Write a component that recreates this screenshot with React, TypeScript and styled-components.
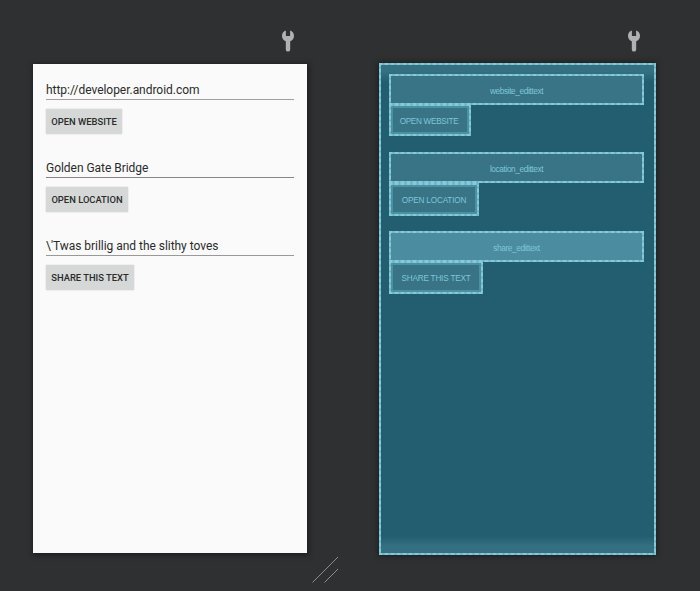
import React from "react";
import styled, { createGlobalStyle, css } from "styled-components";

const GlobalStyle = createGlobalStyle`
  * { box-sizing: border-box; }
  body { margin: 0; background: #2f3032; }
`;

const dashedEdges = css`
  background-image:
    repeating-linear-gradient(90deg, #86c9d9 0 3px, #6ab2c3 4px 5px, #86c9d9 6px),
    repeating-linear-gradient(90deg, #86c9d9 0 3px, #6ab2c3 4px 5px, #86c9d9 6px),
    repeating-linear-gradient(180deg, #86c9d9 0 3px, #6ab2c3 4px 5px, #86c9d9 6px),
    repeating-linear-gradient(180deg, #86c9d9 0 3px, #6ab2c3 4px 5px, #86c9d9 6px);
  background-size: 100% 2px, 100% 2px, 2px 100%, 2px 100%;
  background-position: 0 0, 0 100%, 0 0, 100% 0;
  background-repeat: no-repeat;
`;

const Surface = styled.main`
  position: relative;
  display: flex;
  align-items: flex-start;
  width: 700px;
  height: 591px;
  padding: 29px 0 0 33px;
  gap: 72px;
  overflow: hidden;
  background: #2f3032;
`;

const Column = styled.section<{ $width: number }>`
  display: flex;
  flex-direction: column;
  width: ${(p) => p.$width}px;
`;

const Toolbar = styled.div<{ $inset: number; $height: number }>`
  display: flex;
  justify-content: flex-end;
  height: ${(p) => p.$height}px;
  padding-right: ${(p) => p.$inset}px;
`;

const DesignScreen = styled.div`
  display: flex;
  flex-direction: column;
  height: 489px;
  padding: 17px 13px 0;
  background: #fafafa;
  box-shadow: 1px 1px 5px 1px #1b1c1d;
`;

const Group = styled.div`
  display: flex;
  flex-direction: column;
  align-items: flex-start;
  height: 78px;
`;

const Field = styled.div<{ $line: string }>`
  width: 248px;
  height: 19px;
  border-bottom: 1px solid ${(p) => p.$line};
  font: 400 12px/18.5px Roboto, sans-serif;
  letter-spacing: -0.035px;
  color: #2b2b2b;
  white-space: nowrap;
`;

const Action = styled.div<{ $width: number }>`
  width: ${(p) => p.$width}px;
  height: 25px;
  margin-top: 9px;
  border-radius: 1px;
  background: #d6d8d7;
  box-shadow: 0 0 1.5px rgba(0, 0, 0, 0.25);
  font: 500 9.4px/25.5px Roboto, sans-serif;
  color: #2a2b2b;
  text-align: center;
  white-space: nowrap;
`;

const BlueprintScreen = styled.div`
  position: relative;
  height: 492px;
  padding: 11px 10px 0;
  background-color: #235d70;
  box-shadow: 0 0 5px 1px #1d1e1f;
  ${dashedEdges}
`;

const SystemBar = styled.div<{ $bottom?: boolean }>`
  position: absolute;
  left: 2px;
  right: 2px;
  height: 17px;
  ${(p) => (p.$bottom ? "bottom: 2px;" : "top: 2px;")}
  background: linear-gradient(${(p) => (p.$bottom ? "#235d70, #356f82 60%" : "#356f82 40%, #235d70")});
`;

const BlueGroup = styled.div<{ $height: number }>`
  position: relative;
  display: flex;
  flex-direction: column;
  align-items: flex-start;
  height: ${(p) => p.$height}px;
`;

const BlueField = styled.div<{ $hover?: boolean }>`
  width: 255px;
  height: 31px;
  background-color: ${(p) => (p.$hover ? "#4b8ca0" : "#397386")};
  ${dashedEdges}
  font: 400 8.3px/35px "Liberation Sans", sans-serif;
  letter-spacing: -0.4px;
  color: #7dc7d8;
  text-align: center;
`;

const BlueButton = styled.div<{ $width: number; $height: number; $overlap: number }>`
  display: flex;
  width: ${(p) => p.$width}px;
  height: ${(p) => p.$height}px;
  margin-top: ${(p) => -p.$overlap}px;
  padding: 2px;
  background-color: #397386;
  ${dashedEdges}
`;

const BlueLabel = styled.div<{ $tracking: number; $inset: number }>`
  flex: 1;
  padding-right: ${(p) => p.$inset}px;
  border: 2px solid #4b91a4;
  font: 400 8.2px/28px "Liberation Sans", sans-serif;
  letter-spacing: ${(p) => p.$tracking}px;
  color: #7dc7d8;
  text-align: center;
  white-space: nowrap;
`;

const ResizeGrip = styled.svg`
  position: absolute;
  left: 311px;
  top: 556px;
`;

const Wrench = () => (
  <svg width="14" height="24" viewBox="0 0 14 24" aria-label="Device configuration">
    <path
      d="M4.9 1.4C2.4 2.1 1 4.1 1 6.7c0 2.8 1.5 4.9 3.8 5.6v8.1a2.2 2.2 0 0 0 4.4 0v-8.1c2.3-.7 3.8-2.8 3.8-5.6 0-2.6-1.4-4.6-3.9-5.3v5.7H4.9z"
      fill="#afb1b3"
    />
  </svg>
);

const rows = [
  { text: "http://developer.android.com", action: "OPEN WEBSITE", width: 76, line: "#a0a0a0", id: "website_edittext", blueWidth: 82, blueHeight: 32, overlap: 1, height: 78, labelTracking: -0.3, inset: 2 },
  { text: "Golden Gate Bridge", action: "OPEN LOCATION", width: 82, line: "#868686", id: "location_edittext", blueWidth: 90, blueHeight: 33, overlap: 0, height: 79, labelTracking: -0.18, inset: 0 },
  { text: "\\'Twas brillig and the slithy toves", action: "SHARE THIS TEXT", width: 88, line: "#999", id: "share_edittext", blueWidth: 94, blueHeight: 33, overlap: 1, height: 79, labelTracking: -0.2, inset: 0 },
];

export default function App() {
  return (
    <>
      <GlobalStyle />
      <Surface>
        <Column $width={274}>
          <Toolbar $inset={12} $height={35}><Wrench /></Toolbar>
          <DesignScreen>
            {rows.map((r) => (
              <Group key={r.id}>
                <Field $line={r.line}>{r.text}</Field>
                <Action $width={r.width}>{r.action}</Action>
              </Group>
            ))}
          </DesignScreen>
        </Column>
        <Column $width={277}>
          <Toolbar $inset={15} $height={34}><Wrench /></Toolbar>
          <BlueprintScreen>
            <SystemBar />
            {rows.map((r, i) => (
              <BlueGroup key={r.id} $height={r.height}>
                <BlueField $hover={i === 2}>{r.id}</BlueField>
                <BlueButton $width={r.blueWidth} $height={r.blueHeight} $overlap={r.overlap}>
                  <BlueLabel $tracking={r.labelTracking} $inset={r.inset}>{r.action}</BlueLabel>
                </BlueButton>
              </BlueGroup>
            ))}
            <SystemBar $bottom />
          </BlueprintScreen>
        </Column>
        <ResizeGrip width="28" height="28" viewBox="0 0 28 28">
          <path d="M1.5 26.5L27 1M13.5 26.5L27 13" stroke="#8b8c8d" fill="none" />
        </ResizeGrip>
      </Surface>
    </>
  );
}
